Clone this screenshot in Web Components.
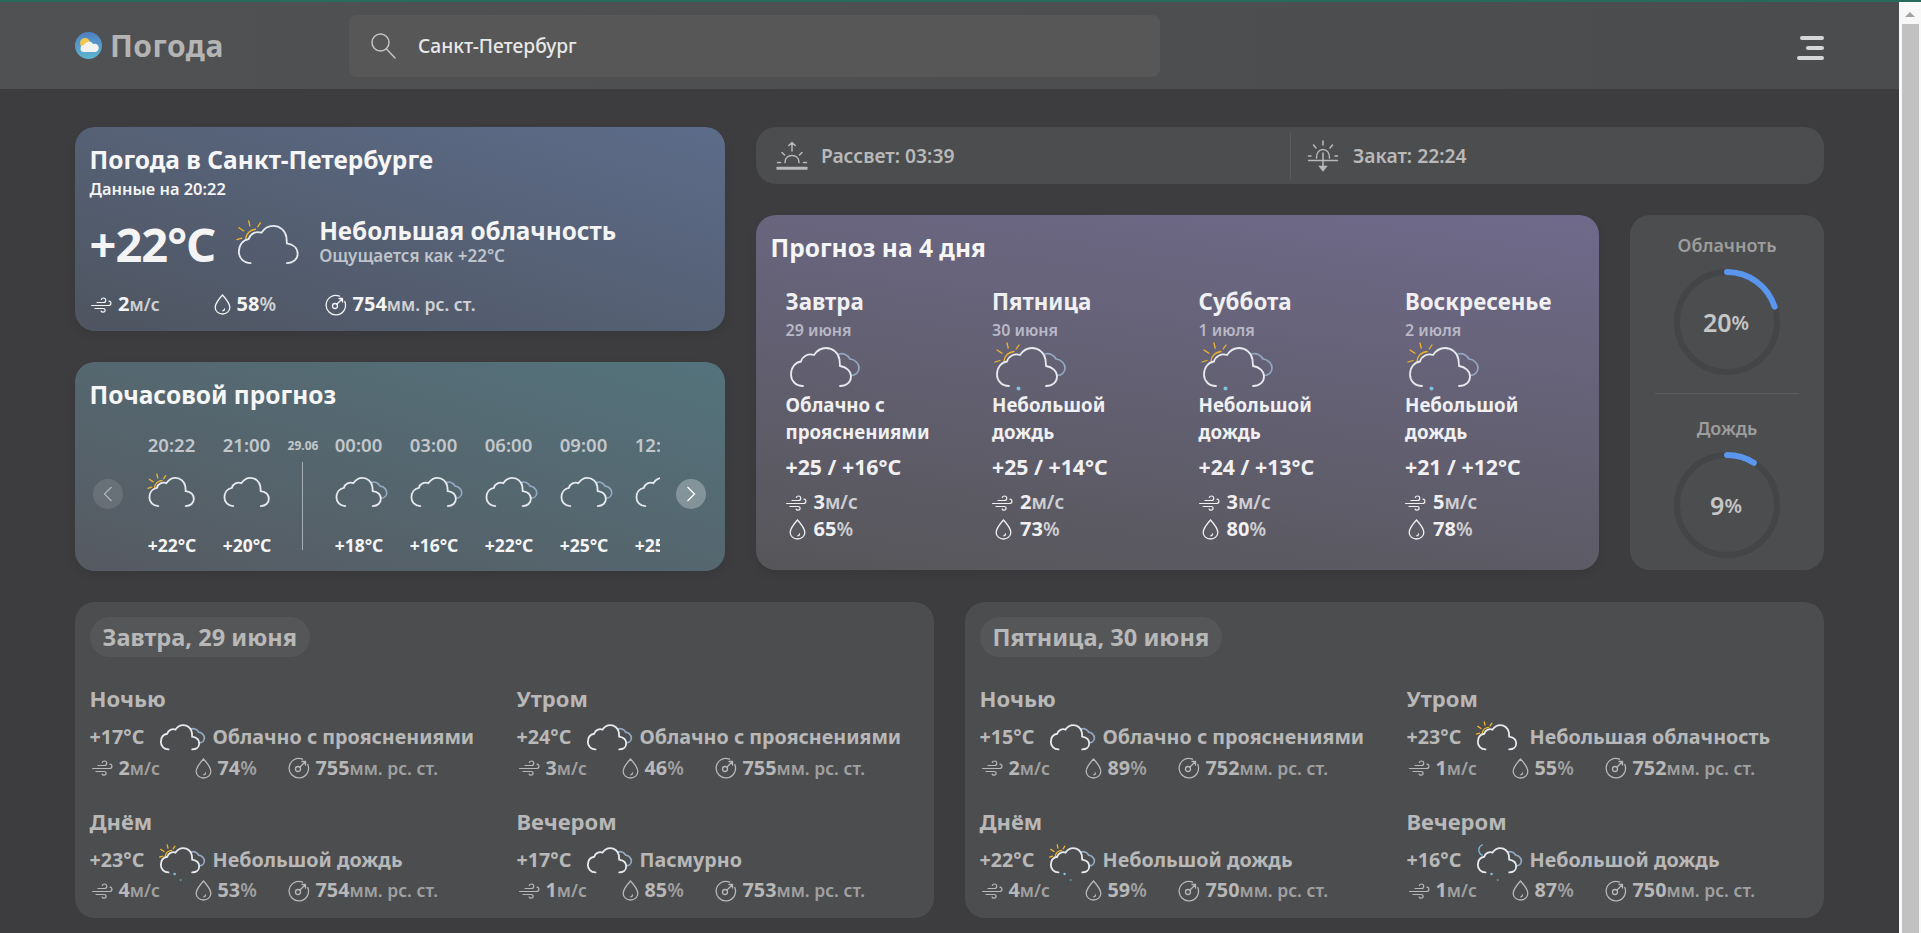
<!DOCTYPE html>
<html lang="ru">
<head>
<meta charset="utf-8">
<title>Погода</title>
<style>
html, body { margin: 0; height: 100%; overflow: hidden; background: #3d3d3f; }
body { font-family: "Noto Sans", "Open Sans", sans-serif; }
</style>
</head>
<body>
<w-app></w-app>
<script>
// иконка погоды: облако + солнце / луна / второе облако / капли
class WCloud extends HTMLElement {
    connectedCallback() {
        const s = parseFloat(this.getAttribute('scale') || 1);
        const sun = this.hasAttribute('sun');
        const moon = this.hasAttribute('moon');
        const back = this.hasAttribute('back');
        const rain = parseInt(this.getAttribute('rain') || 0);
        const w = (back ? 78 : 68) * s;
        const root = this.attachShadow({mode: 'open'});
        root.innerHTML = `
        <style>
            :host { display: inline-flex; flex: none; width: ${w}px; height: ${52 * s}px; }
            svg { display: block; overflow: visible; }
            path { vector-effect: non-scaling-stroke; }
        </style>
        <svg width="${w}" height="${52 * s}" viewBox="-5 -7 ${back ? 78 : 68} 52" fill="none" stroke-linecap="round">
            ${back ? `<path d="M49 7C53 5.500 58 8 60 12C65 12.500 69 16.500 69 21C69 25.500 65.500 28.500 61 28.500" stroke="#93a9c2" stroke-width="1.700"/>` : ''}
            ${sun ? `<g stroke="#f0b429" stroke-width="1.300">
                <path d="M8 14C8.500 9 12.500 5 18 4.500"/>
                <path d="M-1 15L4 13.500M1 3L6 6.200M11 -4L12.200 1M23 -2L20.200 2"/>
            </g>` : ''}
            ${moon ? `<path d="M8 -4C3 -2 1 3 3.500 8C4.500 10 6 11.500 8 12" stroke="#7db6d6" stroke-width="1.400"/>` : ''}
            <path d="M13 39C5.500 39 1 33.500 1 27.500C1 20.500 5 15.500 11 14.500C12.500 9 18.500 6 24 8C27 3.500 31 1 36 1C43 1 48.500 6 49.500 12.500L50 19C56.500 20 61 24 61 29.500C61 35 56.500 39 50 39" stroke="#e6e9ee" stroke-width="1.800"/>
            ${rain > 0 ? `<circle cx="22.500" cy="41.500" r="2" fill="#7fc0dc"/>` : ''}
            ${rain > 1 ? `<circle cx="32" cy="51" r="1.600" fill="#5f96aa"/>` : ''}
        </svg>`;
    }
}
customElements.define('w-cloud', WCloud);

// мелкие линейные иконки
const ICONS = {
    wind: `<svg width="21" height="16" viewBox="0 0 21 16" fill="none" stroke="currentColor" stroke-width="1.200" stroke-linecap="round">
        <path d="M6 5.500H12.500C15.500 5.500 15.500 1 12.500 1C11.300 1 10.500 1.700 10.300 2.500"/>
        <path d="M0.600 8.500H17.500C20.500 8.500 20.800 4.200 18 4.200"/>
        <path d="M4 11.500H12C14.800 11.500 14.800 15.200 12 15.200C11 15.200 10.300 14.700 10.100 14"/>
    </svg>`,
    drop: `<svg width="17" height="21" viewBox="0 0 17 21" fill="none" stroke="currentColor" stroke-width="1.300" stroke-linecap="round">
        <path d="M8.500 1C8.500 1 1.200 9 1.200 13.400C1.200 17.200 4.500 20 8.500 20C12.500 20 15.800 17.200 15.800 13.400C15.800 9 8.500 1 8.500 1Z"/>
        <path d="M10.500 15C10.500 16 9.800 16.700 8.800 16.800"/>
    </svg>`,
    gauge: `<svg width="22" height="22" viewBox="0 0 22 22" fill="none" stroke="currentColor" stroke-width="1.300" stroke-linecap="round" stroke-linejoin="round">
        <path d="M14.500 2.200A9.700 9.700 0 1 0 19.800 7.500"/>
        <circle cx="10" cy="12" r="2.500"/>
        <path d="M12 10L17.500 4.500M14 4.500H17.500V8"/>
    </svg>`,
    sunrise: `<svg width="32" height="29" viewBox="0 0 32 29" fill="none" stroke="currentColor" stroke-width="1.500" stroke-linecap="round">
        <path d="M1 26.500H31M1 28H31"/>
        <path d="M9 21.500C9 17 12 14.500 16 14.500C20 14.500 23 17 23 21.500"/>
        <path d="M16 10V1.500M12.800 4.500L16 1.500L19.200 4.500"/>
        <path d="M6 11.500L8.500 14M26 11.500L23.500 14M1.500 21.500H4.500M27.500 21.500H30.500"/>
    </svg>`,
    sunset: `<svg width="32" height="32" viewBox="0 0 32 32" fill="none" stroke="currentColor" stroke-width="1.500" stroke-linecap="round">
        <path d="M1.500 20.500H30.500"/>
        <path d="M9.500 18C9.500 13 12 9.500 16 9.500C20 9.500 22.500 13 22.500 18"/>
        <path d="M16 1V5M6.500 5L9 8M25.500 5L23 8M1.500 16H4M28 16H30.500"/>
        <path d="M16 13V29M12.800 26.500H19.200L16 30.500Z" fill="currentColor"/>
    </svg>`
};

// показатель: иконка, значение, единица
class WStat extends HTMLElement {
    connectedCallback() {
        const root = this.attachShadow({mode: 'open'});
        const unit = this.getAttribute('unit');
        root.innerHTML = `
        <style>
            :host { display: inline-flex; align-items: center; gap: var(--stat-gap, 6px); flex: none; line-height: 28px; white-space: nowrap; }
            .ic { display: flex; color: var(--stat-icon, currentColor); }
            b { font-size: var(--stat-size, 18px); font-weight: 700; }
            span { font-size: var(--stat-unit, 17px); font-weight: 600; opacity: .78; }
            span.pct { font-size: 19px; }
        </style>
        <div class="ic">${ICONS[this.getAttribute('icon')]}</div>
        <div><b>${this.getAttribute('value')}</b><span class="${unit === '%' ? 'pct' : ''}">${unit}</span></div>`;
    }
}
customElements.define('w-stat', WStat);

class WHeader extends HTMLElement {
    constructor() {
        super();
        this.attachShadow({mode: 'open'}).innerHTML = `
        <style>
            :host { display: flex; align-items: center; height: 87px; padding: 0 75px; box-sizing: border-box; background: linear-gradient(90deg, #505153, #4b4c4e); }
            .logo { display: flex; align-items: center; gap: 8px; width: 274px; flex: none; }
            .logo span { font-size: 30px; font-weight: 700; color: #b4b4b4; letter-spacing: .5px; }
            .search { display: flex; align-items: center; width: 811px; height: 62px; box-sizing: border-box; padding-left: 21px; gap: 21px; background: #575758; border-radius: 8px; }
            .search span { font-size: 19.200px; color: #e8e8e8; font-weight: 500; }
            .menu { margin-left: auto; margin-top: 4px; display: flex; flex-direction: column; align-items: flex-end; gap: 6px; width: 27px; }
            .menu i { display: block; height: 4px; background: #d6d6d6; border-radius: 2px; }
        </style>
        <div class="logo">
            <svg width="27" height="27" viewBox="0 0 27 27">
                <defs><linearGradient id="lg" x1="0" y1="0" x2="0" y2="1"><stop offset="0" stop-color="#4f7fc4"/><stop offset="1" stop-color="#5eb6cf"/></linearGradient></defs>
                <circle cx="13.500" cy="13.500" r="13.500" fill="url(#lg)"/>
                <circle cx="10" cy="11" r="5" fill="#f2c84b"/>
                <path d="M9 20a3.500 3.500 0 0 1 0-7a5 5 0 0 1 9-1a4 4 0 0 1 3 8z" fill="#f2f2ee"/>
            </svg>
            <span>Погода</span>
        </div>
        <div class="search">
            <svg width="27" height="27" viewBox="0 0 27 27" fill="none" stroke="#c4c4c4" stroke-width="1.500" stroke-linecap="round"><circle cx="10.500" cy="10.500" r="8.500"/><path d="M16.500 17L25 26"/></svg>
            <span>Санкт-Петербург</span>
        </div>
        <div class="menu"><i style="width:24px"></i><i style="width:18px"></i><i style="width:27px"></i></div>`;
    }
}
customElements.define('w-header', WHeader);

// карточка с заливкой, заливка приходит через --card-bg
class WCard extends HTMLElement {
    constructor() {
        super();
        this.attachShadow({mode: 'open'}).innerHTML = `
        <style>
            :host { display: block; box-sizing: border-box; border-radius: 20px; background: var(--card-bg, #4c4d4f); padding: var(--card-pad, 15px); box-shadow: 0 4px 10px rgba(0,0,0,.08); min-width: 0; }
            h2 { margin: 0; font-size: 24.500px; line-height: 32px; font-weight: 700; color: #f6f6f6; }
        </style>
        <h2><slot name="title"></slot></h2>
        <slot></slot>`;
    }
}
customElements.define('w-card', WCard);

class WNow extends HTMLElement {
    constructor() {
        super();
        this.attachShadow({mode: 'open'}).innerHTML = `
        <style>
            :host { display: block; color: #f4f4f4; --card-bg: linear-gradient(197deg, #5d6c8a, #4e5560); height: 204px; }
            w-card { height: 100%; --card-pad: 17px 15px 17px 14.500px; }
            .sub { font-size: 16.400px; line-height: 22px; font-weight: 600; margin-top: 2px; }
            .mid { display: flex; align-items: center; margin-top: 16px; height: 56px; }
            .temp { font-size: 47px; font-weight: 700; width: 143px; flex: none; line-height: 56px; letter-spacing: -1px; }
            .mid w-cloud { margin-right: 20px; margin-top: -2px; }
            .desc { font-size: 24.300px; line-height: 30px; font-weight: 700; margin-top: -6px; }
            .feel { font-size: 17px; line-height: 20px; font-weight: 600; color: #bfc3cb; }
            .row { display: flex; margin-top: 18px; padding-left: 1.500px; --stat-size: 20px; --stat-unit: 17.500px; }
            .row w-stat:nth-child(1) { width: 122.500px; }
            .row w-stat:nth-child(2) { width: 111px; }
        </style>
        <w-card>
            <span slot="title">Погода в Санкт-Петербурге</span>
            <div class="sub">Данные на 20:22</div>
            <div class="mid">
                <div class="temp">+22°C</div>
                <w-cloud sun scale="0.98"></w-cloud>
                <div><div class="desc">Небольшая облачность</div><div class="feel">Ощущается как +22°C</div></div>
            </div>
            <div class="row">
                <w-stat icon="wind" value="2" unit="м/с"></w-stat>
                <w-stat icon="drop" value="58" unit="%"></w-stat>
                <w-stat icon="gauge" value="754" unit="мм. рс. ст."></w-stat>
            </div>
        </w-card>`;
    }
}
customElements.define('w-now', WNow);

class WHourly extends HTMLElement {
    constructor() {
        super();
        const hours = [
            ['20:22', 'sun', '+22°C'], ['21:00', '', '+20°C'], 'sep',
            ['00:00', 'back', '+18°C'], ['03:00', 'back', '+16°C'], ['06:00', 'back', '+22°C'],
            ['09:00', 'back', '+25°C'], ['12:00', 'back', '+25°C']
        ];
        const items = hours.map(h => h === 'sep'
            ? `<div class="sep"><span>29.06</span><i></i></div>`
            : `<div class="hour"><div class="t">${h[0]}</div><div class="ic"><w-cloud ${h[1]} scale="0.74"></w-cloud></div><div class="v">${h[2]}</div></div>`
        ).join('');
        this.attachShadow({mode: 'open'}).innerHTML = `
        <style>
            :host { display: block; color: #f4f4f4; --card-bg: linear-gradient(197deg, #54737c, #565a62); height: 209px; }
            w-card { height: 100%; --card-pad: 17px 15px 0 14.500px; }
            .wrap { display: flex; align-items: center; margin-top: 21px; position: relative; margin-left: 3px; }
            .btn { width: 30px; height: 30px; border-radius: 50%; flex: none; display: flex; align-items: center; justify-content: center; background: rgba(255,255,255,.28); }
            .btn.off { background: rgba(255,255,255,.14); opacity: .8; }
            .list { display: flex; width: 525px; overflow: hidden; margin: 0 16px 0 12px; flex: none; }
            .hour { width: 75px; flex: none; text-align: center; }
            .t { font-size: 18.500px; line-height: 26px; font-weight: 600; color: #c3c7cb; margin-left: -1px; }
            .ic { height: 50px; margin-top: 14px; display: flex; justify-content: flex-start; padding-left: 10.500px; }
            .v { font-size: 17.500px; line-height: 24px; font-weight: 700; margin-top: 10.500px; }
            .sep { width: 37px; flex: none; position: relative; text-align: center; }
            .sep span { display: block; font-size: 12px; line-height: 26px; font-weight: 700; color: #c3c7cb; margin: 1px -10px 0; }
            .sep i { position: absolute; left: 17px; top: 30px; bottom: 7px; width: 1px; background: #a6afb4; }
        </style>
        <w-card>
            <span slot="title">Почасовой прогноз</span>
            <div class="wrap">
                <div class="btn off"><svg width="10" height="16" viewBox="0 0 10 16" fill="none" stroke="#c8cdd2" stroke-width="1.200"><path d="M8.500 1L1.500 8L8.500 15"/></svg></div>
                <div class="list">${items}</div>
                <div class="btn"><svg width="10" height="16" viewBox="0 0 10 16" fill="none" stroke="#fff" stroke-width="1.300"><path d="M1.500 1L8.500 8L1.500 15"/></svg></div>
            </div>
        </w-card>`;
    }
}
customElements.define('w-hourly', WHourly);

class WSun extends HTMLElement {
    constructor() {
        super();
        this.attachShadow({mode: 'open'}).innerHTML = `
        <style>
            :host { display: flex; align-items: center; height: 57px; background: #4c4d4f; border-radius: 20px; color: #b9b9b9; font-size: 19.300px; font-weight: 600; }
            .a, .b { display: flex; align-items: center; gap: 13px; }
            .a { width: 534px; padding-left: 20px; box-sizing: border-box; }
            .b { padding-left: 16px; gap: 14px; height: 46px; border-left: 1px solid #5b5c5e; }
            svg { display: block; }
        </style>
        <div class="a">${ICONS.sunrise}<span>Рассвет: 03:39</span></div>
        <div class="b">${ICONS.sunset}<span>Закат: 22:24</span></div>`;
    }
}
customElements.define('w-sun', WSun);

class WForecast extends HTMLElement {
    constructor() {
        super();
        const days = [
            ['Завтра', '29 июня', 'Облачно с прояснениями', '+25 / +16°C', '3', '65', 'back'],
            ['Пятница', '30 июня', 'Небольшой дождь', '+25 / +14°C', '2', '73', 'sun back rain="1"'],
            ['Суббота', '1 июля', 'Небольшой дождь', '+24 / +13°C', '3', '80', 'sun back rain="1"'],
            ['Воскресенье', '2 июля', 'Небольшой дождь', '+21 / +12°C', '5', '78', 'sun back rain="1"']
        ];
        const cols = days.map(d => `
            <div class="day">
                <div class="name">${d[0]}</div>
                <div class="date">${d[1]}</div>
                <w-cloud ${d[6]}></w-cloud>
                <div class="desc">${d[2]}</div>
                <div class="temp">${d[3]}</div>
                <w-stat icon="wind" value="${d[4]}" unit="м/с"></w-stat>
                <w-stat icon="drop" value="${d[5]}" unit="%"></w-stat>
            </div>`).join('');
        this.attachShadow({mode: 'open'}).innerHTML = `
        <style>
            :host { display: block; flex: 1; min-width: 0; color: #f0f0f2; --card-bg: linear-gradient(188deg, #6f6a8b, #565659); height: 355px; }
            w-card { height: 100%; --card-pad: 17px 15px 17px 14.500px; }
            .days { display: grid; grid-template-columns: repeat(3, 206.500px) 1fr; padding-left: 15px; margin-top: 23px; }
            .name { font-size: 22.300px; line-height: 30px; font-weight: 700; }
            .date { font-size: 16px; line-height: 22px; font-weight: 600; color: #b9b8c6; margin-top: 2px; }
            w-cloud { display: flex; height: 43px; margin: -1px 0 8px -1px; }
            .desc { font-size: 18.700px; line-height: 27px; font-weight: 700; width: 170px; min-height: 54px; }
            .temp { font-size: 21.300px; line-height: 30px; font-weight: 700; margin-top: 7px; margin-bottom: 7px; }
            w-stat { display: flex; height: 27px; --stat-size: 20px; --stat-unit: 19px; --stat-gap: 7px; line-height: 27px; }
            w-stat + w-stat { padding-left: 3px; --stat-gap: 8px; }
        </style>
        <w-card>
            <span slot="title">Прогноз на 4 дня</span>
            <div class="days">${cols}</div>
        </w-card>`;
    }
}
customElements.define('w-forecast', WForecast);

class WRing extends HTMLElement {
    connectedCallback() {
        const pct = parseFloat(this.getAttribute('value'));
        const r = 50;
        const len = 2 * Math.PI * r;
        this.attachShadow({mode: 'open'}).innerHTML = `
        <style>
            :host { display: flex; flex-direction: column; align-items: center; color: #9d9d9d; }
            .lbl { font-size: 18px; line-height: 26px; font-weight: 600; }
            .box { position: relative; width: 106px; height: 106px; margin-top: 11px; }
            svg { display: block; transform: rotate(-90deg); }
            .num { position: absolute; inset: 0; display: flex; align-items: center; justify-content: center; color: #c6c6c6; font-size: 25px; font-weight: 600; padding-right: 2px; }
            .num span { font-size: 20px; }
        </style>
        <div class="lbl">${this.getAttribute('label')}</div>
        <div class="box">
            <svg width="106" height="106" viewBox="0 0 106 106" fill="none" stroke-width="6">
                <circle cx="53" cy="53" r="${r}" stroke="#444547"/>
                <circle cx="53" cy="53" r="${r}" stroke="#5a96ee" stroke-linecap="round" stroke-dasharray="${len * pct / 100} ${len}"/>
            </svg>
            <div class="num">${pct}<span>%</span></div>
        </div>`;
    }
}
customElements.define('w-ring', WRing);

class WRings extends HTMLElement {
    constructor() {
        super();
        this.attachShadow({mode: 'open'}).innerHTML = `
        <style>
            :host { display: flex; flex-direction: column; align-items: center; width: 194px; height: 355px; flex: none; box-sizing: border-box; padding-top: 17px; background: #4c4d4f; border-radius: 20px; }
            hr { width: 144px; margin: 18px 0 21px; border: 0; height: 1px; background: #5c5d5f; }
        </style>
        <w-ring label="Облачноть" value="20"></w-ring>
        <hr>
        <w-ring label="Дождь" value="9"></w-ring>`;
    }
}
customElements.define('w-rings', WRings);

class WPeriod extends HTMLElement {
    connectedCallback() {
        const a = n => this.getAttribute(n);
        this.attachShadow({mode: 'open'}).innerHTML = `
        <style>
            :host { display: block; color: #b8b8b8; }
            .h { font-size: 22px; line-height: 30px; font-weight: 700; }
            .m { display: flex; align-items: center; height: 37px; margin-top: 5px; font-size: 19.700px; font-weight: 700; }
            .m b { font-weight: 700; width: 67.500px; flex: none; }
            .box { width: 55.500px; flex: none; height: 32px; display: flex; margin-top: -1px; }
            .m .d { font-weight: 700; }
            .s { display: flex; padding-left: 2px; height: 28px; margin-top: -1px; --stat-size: 19.800px; --stat-unit: 17.500px; }
            w-stat:nth-child(1) { width: 103px; }
            w-stat:nth-child(2) { width: 93px; }
        </style>
        <div class="h">${a('title')}</div>
        <div class="m"><b>${a('temp')}</b><div class="box"><w-cloud ${a('icon')} scale="0.64"></w-cloud></div><span class="d">${a('desc')}</span></div>
        <div class="s">
            <w-stat icon="wind" value="${a('w')}" unit="м/с"></w-stat>
            <w-stat icon="drop" value="${a('h')}" unit="%"></w-stat>
            <w-stat icon="gauge" value="${a('p')}" unit="мм. рс. ст."></w-stat>
        </div>`;
    }
}
customElements.define('w-period', WPeriod);

class WDetail extends HTMLElement {
    constructor() {
        super();
        this.attachShadow({mode: 'open'}).innerHTML = `
        <style>
            :host { display: block; height: 316px; box-sizing: border-box; padding: 15px 15px 15px 14.500px; background: #4c4d4f; border-radius: 20px; min-width: 0; }
            .pill { display: inline-block; padding: 0 13px; height: 40px; line-height: 41px; border-radius: 20px; background: #555658; color: #b8b8b8; font-size: 23.600px; font-weight: 700; }
            .grid { display: grid; grid-template-columns: 427px 1fr; row-gap: 23.500px; margin-top: 26px; }
        </style>
        <div class="pill"><slot name="title"></slot></div>
        <div class="grid"><slot></slot></div>`;
    }
}
customElements.define('w-detail', WDetail);

class WScrollbar extends HTMLElement {
    constructor() {
        super();
        this.attachShadow({mode: 'open'}).innerHTML = `
        <style>
            :host { display: flex; flex-direction: column; align-items: center; width: 22px; flex: none; background: #f8f8f8; }
            svg { margin: 10px 0 7px; }
            div { width: 17px; flex: 1; background: #c1c1c1; }
        </style>
        <svg width="10" height="5" viewBox="0 0 10 5"><path d="M5 0L10 5H0Z" fill="#a3a3a3"/></svg>
        <div></div>`;
    }
}
customElements.define('w-scrollbar', WScrollbar);

class WApp extends HTMLElement {
    constructor() {
        super();
        this.attachShadow({mode: 'open'}).innerHTML = `
        <style>
            :host { display: flex; flex-direction: column; height: 933px; overflow: hidden; background: #3d3d3f; border-top: 2px solid #2a6a5a; box-sizing: border-box; }
            .shell { display: flex; flex: 1; min-height: 0; }
            .page { flex: 1; min-width: 0; }
            main { display: flex; flex-direction: column; gap: 31px; padding: 38px 75px 0; }
            .top { display: grid; grid-template-columns: 650px minmax(0, 1fr); gap: 31px; }
            .col { display: flex; flex-direction: column; gap: 31px; min-width: 0; }
            .pair { display: flex; gap: 31px; }
            .bottom { display: grid; grid-template-columns: 1fr 1fr; gap: 31px; }
        </style>
        <div class="shell">
            <div class="page">
                <w-header></w-header>
                <main>
                    <div class="top">
                        <div class="col"><w-now></w-now><w-hourly></w-hourly></div>
                        <div class="col">
                            <w-sun></w-sun>
                            <div class="pair"><w-forecast></w-forecast><w-rings></w-rings></div>
                        </div>
                    </div>
                    <div class="bottom">
                        <w-detail>
                            <span slot="title">Завтра, 29 июня</span>
                            <w-period title="Ночью" temp="+17°C" icon="back" desc="Облачно с прояснениями" w="2" h="74" p="755"></w-period>
                            <w-period title="Утром" temp="+24°C" icon="back" desc="Облачно с прояснениями" w="3" h="46" p="755"></w-period>
                            <w-period title="Днём" temp="+23°C" icon='sun back rain="2"' desc="Небольшой дождь" w="4" h="53" p="754"></w-period>
                            <w-period title="Вечером" temp="+17°C" icon="back" desc="Пасмурно" w="1" h="85" p="753"></w-period>
                        </w-detail>
                        <w-detail>
                            <span slot="title">Пятница, 30 июня</span>
                            <w-period title="Ночью" temp="+15°C" icon="back" desc="Облачно с прояснениями" w="2" h="89" p="752"></w-period>
                            <w-period title="Утром" temp="+23°C" icon="sun" desc="Небольшая облачность" w="1" h="55" p="752"></w-period>
                            <w-period title="Днём" temp="+22°C" icon='sun back rain="2"' desc="Небольшой дождь" w="4" h="59" p="750"></w-period>
                            <w-period title="Вечером" temp="+16°C" icon='moon back rain="2"' desc="Небольшой дождь" w="1" h="87" p="750"></w-period>
                        </w-detail>
                    </div>
                </main>
            </div>
            <w-scrollbar></w-scrollbar>
        </div>`;
    }
}
customElements.define('w-app', WApp);
</script>
</body>
</html>
